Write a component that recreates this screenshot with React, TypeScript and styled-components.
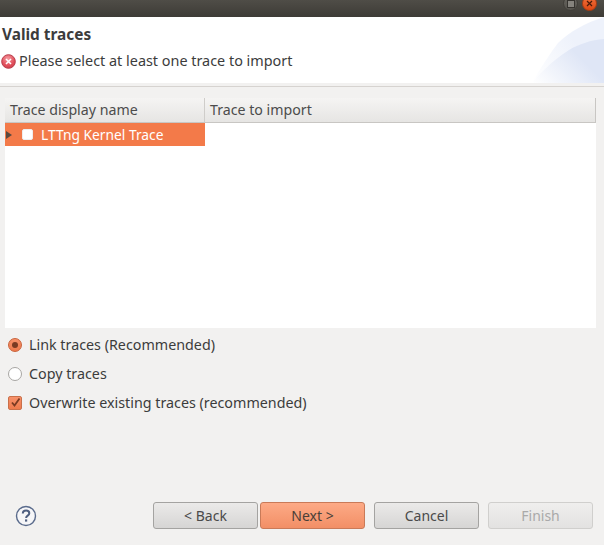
import React from "react";
import styled, { createGlobalStyle } from "styled-components";

const Global = createGlobalStyle`
  html, body { margin: 0; padding: 0; background: #f2f1f0; }
  body { font-family: "Noto Sans", "Open Sans", sans-serif; font-size: 14px; color: #3c3c3c; }
`;

const Page = styled.div`
  width: 604px;
  height: 545px;
  display: flex;
  flex-direction: column;
  overflow: hidden;
  background: #f2f1f0;
`;

const TitleBar = styled.div`
  height: 17px;
  flex: none;
  display: flex;
  justify-content: flex-end;
  align-items: flex-end;
  gap: 4px;
  padding-right: 7px;
  box-sizing: border-box;
  background: linear-gradient(#4f4d47, #3d3b36);
  overflow: hidden;
`;

const WindowButton = styled.div<{ $close?: boolean }>`
  width: 15px;
  height: 15px;
  margin-bottom: 6px;
  border-radius: 50%;
  display: flex;
  align-items: center;
  justify-content: center;
  background: ${(p) => (p.$close ? "linear-gradient(#f0703c,#dd4814)" : "linear-gradient(#66645e,#55534d)")};
  border: 1px solid ${(p) => (p.$close ? "#b03c10" : "#403e39")};
  box-sizing: border-box;
`;

const Banner = styled.div`
  position: relative;
  height: 66px;
  flex: none;
  background: #fff;
  padding: 9px 2px 0;
  box-sizing: border-box;
`;

const BannerArt = styled.svg`
  position: absolute;
  right: 0;
  top: 0;
`;

const Title = styled.div`
  font-weight: 700;
  font-size: 15.4px;
  line-height: 18px;
  color: #3c3c3c;
`;

const Message = styled.div`
  display: flex;
  align-items: center;
  gap: 3px;
  margin-top: 7px;
  margin-left: -1px;
  font-size: 14.4px;
  line-height: 20px;
`;

const Separator = styled.div`
  flex: none;
  height: 1px;
  margin-top: 3px;
  background: #d6d3d0;
`;

const TableWrap = styled.div`
  flex: none;
  margin: 11px 8px 0 5px;
  height: 230px;
  background: #fff;
  display: flex;
  flex-direction: column;
`;

const HeaderRow = styled.div`
  flex: none;
  height: 25px;
  display: flex;
  background: linear-gradient(#f5f4f3, #e6e5e3);
  border-bottom: 1px solid #c8c6c3;
  box-sizing: border-box;
  border-right: 1px solid #c8c6c3;
`;

const HeaderCell = styled.div<{ $w?: number }>`
  ${(p) => (p.$w ? `width: ${p.$w}px; flex: none; border-right: 1px solid #cfcdca;` : "flex: 1;")}
  box-sizing: border-box;
  padding-left: 5px;
  line-height: 24px;
  font-size: 14.2px;
  color: #4c4c4c;
`;

const SelectedRow = styled.div`
  width: 200px;
  height: 23px;
  display: flex;
  align-items: center;
  background: #f37a49;
  color: #fff;
  font-size: 13.8px;
`;

const Arrow = styled.div`
  width: 0;
  height: 0;
  margin-left: 1px;
  border-left: 6px solid #5a4a40;
  border-top: 4px solid transparent;
  border-bottom: 4px solid transparent;
`;

const RowCheck = styled.div`
  width: 11px;
  height: 11px;
  margin-left: 10px;
  box-sizing: border-box;
  background: #fff;
  border-radius: 2px;
  border: 1px solid #eee;
`;

const RowLabel = styled.span`
  margin-left: 8px;
`;

const Options = styled.div`
  flex: none;
  margin: 2px 0 0 8px;
  display: flex;
  flex-direction: column;
`;

const Option = styled.div`
  height: 29px;
  display: flex;
  align-items: center;
  gap: 7px;
  font-size: 14.3px;
  color: #3c3c3c;
`;

const Radio = styled.div<{ $on?: boolean }>`
  width: 14px;
  height: 14px;
  box-sizing: border-box;
  border-radius: 50%;
  display: flex;
  align-items: center;
  justify-content: center;
  border: 1px solid ${(p) => (p.$on ? "#c9623a" : "#a8a6a3")};
  background: ${(p) => (p.$on ? "linear-gradient(#f7916a,#ee7a4c)" : "#fff")};
`;

const Dot = styled.div`
  width: 6px;
  height: 6px;
  border-radius: 50%;
  background: #7a3a22;
`;

const Check = styled.div`
  width: 14px;
  height: 14px;
  box-sizing: border-box;
  border-radius: 2px;
  border: 1px solid #c9704a;
  background: linear-gradient(#f7916a,#ee7a4c);
  display: flex;
  align-items: center;
  justify-content: center;
`;

const Footer = styled.div`
  flex: none;
  margin-top: 85px;
  display: flex;
  align-items: center;
  padding: 0 11px 0 15px;
`;

const Help = styled.svg`
  flex: none;
  margin-right: 116px;
`;

const Buttons = styled.div`
  display: flex;
  gap: 9px;
`;

const ButtonPair = styled.div`
  display: flex;
  gap: 2px;
`;

const Button = styled.div<{ $kind?: "primary" | "disabled" }>`
  width: 105px;
  height: 27px;
  box-sizing: border-box;
  border-radius: 3px;
  display: flex;
  align-items: center;
  justify-content: center;
  font-size: 14px;
  color: ${(p) => (p.$kind === "primary" ? "#4a4038" : p.$kind === "disabled" ? "#a9a9a9" : "#4a4a4a")};
  border: 1px solid ${(p) => (p.$kind === "primary" ? "#c97a58" : p.$kind === "disabled" ? "#d0cfcd" : "#a4a3a1")};
  background: ${(p) =>
    p.$kind === "primary"
      ? "linear-gradient(#fdaa86,#f28f66)"
      : p.$kind === "disabled"
      ? "linear-gradient(#efeeed,#e3e2e1)"
      : "linear-gradient(#ebeae9,#d6d5d4)"};
`;

export default function App() {
  return (
    <Page>
      <Global />
      <TitleBar>
        <WindowButton>
          <svg width="8" height="8" viewBox="0 0 8 8"><rect x="0.5" y="0.5" width="7" height="7" fill="#85837d" stroke="#35332f" /></svg>
        </WindowButton>
        <WindowButton $close>
          <svg width="7" height="7" viewBox="0 0 7 7"><path d="M1 1l5 5M6 1l-5 5" stroke="#4a1a08" strokeWidth="1.2" /></svg>
        </WindowButton>
      </TitleBar>
      <Banner>
        <BannerArt width="75" height="66" viewBox="0 0 75 66">
          <defs>
            <linearGradient id="a" x1="0" y1="1" x2="1" y2="0.3">
              <stop offset="0" stopColor="#fff" />
              <stop offset="0.7" stopColor="#eef2fb" />
            </linearGradient>
            <linearGradient id="b" x1="0" y1="1" x2="1" y2="0.4">
              <stop offset="0" stopColor="#fff" />
              <stop offset="0.75" stopColor="#dfe6f6" />
            </linearGradient>
          </defs>
          <path d="M3 66C12 50 22 35 29 26C40 15 56 6 75 0V66Z" fill="url(#a)" />
          <path d="M3 66C10 58 20 46 40 33C50 27 62 23 75 22V66Z" fill="url(#b)" />
        </BannerArt>
        <Title>Valid traces</Title>
        <Message>
          <svg width="15" height="15" viewBox="0 0 15 15">
            <defs>
              <radialGradient id="err" cx="0.45" cy="0.3" r="0.8">
                <stop offset="0" stopColor="#f59aa0" />
                <stop offset="0.6" stopColor="#e2505c" />
                <stop offset="1" stopColor="#c93a48" />
              </radialGradient>
            </defs>
            <circle cx="7.5" cy="7.5" r="6.8" fill="url(#err)" stroke="#b83a48" />
            <path d="M5 5l5 5M10 5l-5 5" stroke="#fff" strokeWidth="1.6" />
          </svg>
          Please select at least one trace to import
        </Message>
      </Banner>
      <Separator />
      <TableWrap>
        <HeaderRow>
          <HeaderCell $w={200}>Trace display name</HeaderCell>
          <HeaderCell>Trace to import</HeaderCell>
        </HeaderRow>
        <SelectedRow>
          <Arrow />
          <RowCheck />
          <RowLabel>LTTng Kernel Trace</RowLabel>
        </SelectedRow>
      </TableWrap>
      <Options>
        <Option>
          <Radio $on><Dot /></Radio>
          Link traces (Recommended)
        </Option>
        <Option>
          <Radio />
          Copy traces
        </Option>
        <Option>
          <Check>
            <svg width="11" height="11" viewBox="0 0 11 11"><path d="M2 5.5l2.5 3L9.5 1.5" fill="none" stroke="#7a3a22" strokeWidth="1.8" /></svg>
          </Check>
          Overwrite existing traces (recommended)
        </Option>
      </Options>
      <Footer>
        <Help width="22" height="22" viewBox="0 0 22 22">
          <circle cx="11" cy="11" r="9.5" fill="#f6f6f8" stroke="#5a6b8c" strokeWidth="1.4" />
          <path d="M7.8 8.6c0-2 1.5-3 3.3-3s3.2 1 3.2 2.7c0 2.4-3.2 2.3-3.2 4.7" fill="none" stroke="#4f5f80" strokeWidth="2" />
          <rect x="10" y="14.4" width="2.2" height="2.2" fill="#4f5f80" />
        </Help>
        <Buttons>
          <ButtonPair>
            <Button>&lt; Back</Button>
            <Button $kind="primary">Next &gt;</Button>
          </ButtonPair>
          <Button>Cancel</Button>
          <Button $kind="disabled">Finish</Button>
        </Buttons>
      </Footer>
    </Page>
  );
}
